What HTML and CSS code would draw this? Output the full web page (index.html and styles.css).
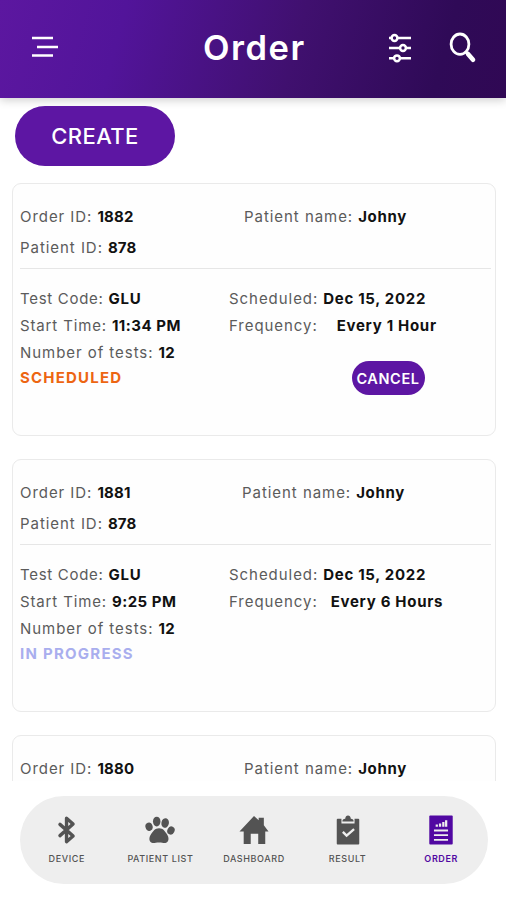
FILE: index.html
```html
<!DOCTYPE html>
<html lang="en">
<head>
<meta charset="utf-8">
<title>Order</title>
<link rel="stylesheet" href="styles.css">
</head>
<body>
<div class="app">
  <header class="topbar">
    <svg class="menu" viewBox="0 0 28 24"><path d="M1 3h21M6 12h21M1 20.500h21" fill="none" stroke="currentColor" stroke-width="2.700"/></svg>
    <h1>Order</h1>
    <svg class="filter" viewBox="0 0 24 32" fill="none" stroke="currentColor"><path d="M1 6h3M9 6h14M1 16h11M18 16h5M1 26.300h5M12 26.300h11" stroke-width="2.600"/><circle cx="6.500" cy="6" r="2.900" stroke-width="2.500"/><circle cx="15" cy="16" r="2.900" stroke-width="2.500"/><circle cx="9" cy="26.300" r="2.900" stroke-width="2.500"/></svg>
    <svg class="search" viewBox="0 0 28 32" fill="none" stroke="currentColor"><ellipse cx="11" cy="12.200" rx="8.900" ry="10.200" stroke-width="2.800"/><path d="M17 20l2 2" stroke-width="2.800"/><path d="M19 22l5 5.700" stroke-width="4.600" stroke-linecap="round"/></svg>
  </header>
  <main class="content">
    <button class="create">CREATE</button>
    <article class="card">
      <section class="summary">
        <p class="order-id"><span class="label">Order ID:</span><b>1882</b></p>
        <p class="patient first"><span class="label">Patient name:</span><b>Johny</b></p>
        <p class="patient-id"><span class="label">Patient ID:</span><b>878</b></p>
      </section>
      <section class="details">
        <p class="code"><span class="label">Test Code:</span><b>GLU</b></p>
        <p class="date"><span class="label">Scheduled:</span><b>Dec 15, 2022</b></p>
        <p class="time"><span class="label">Start Time:</span><b>11:34 PM</b></p>
        <p class="frequency hour"><span class="label">Frequency:</span><b>Every 1 Hour</b></p>
        <p class="tests"><span class="label">Number of tests:</span><b>12</b></p>
      </section>
      <div class="state"><b class="scheduled">SCHEDULED</b><button class="cancel">CANCEL</button></div>
    </article>
    <article class="card">
      <section class="summary">
        <p class="order-id"><span class="label">Order ID:</span><b>1881</b></p>
        <p class="patient second"><span class="label">Patient name:</span><b>Johny</b></p>
        <p class="patient-id"><span class="label">Patient ID:</span><b>878</b></p>
      </section>
      <section class="details">
        <p class="code"><span class="label">Test Code:</span><b>GLU</b></p>
        <p class="date"><span class="label">Scheduled:</span><b>Dec 15, 2022</b></p>
        <p class="time"><span class="label">Start Time:</span><b>9:25 PM</b></p>
        <p class="frequency hours"><span class="label">Frequency:</span><b>Every 6 Hours</b></p>
        <p class="tests"><span class="label">Number of tests:</span><b>12</b></p>
      </section>
      <div class="state"><b class="progress">IN PROGRESS</b></div>
    </article>
    <article class="card">
      <section class="summary">
        <p class="order-id"><span class="label">Order ID:</span><b>1880</b></p>
        <p class="patient third"><span class="label">Patient name:</span><b>Johny</b></p>
      </section>
    </article>
  </main>
  <nav class="tabs">
    <a class="tab"><svg viewBox="0 0 32 32"><path d="M8.500 10l14 12.500-7 6V3.500l7 6-14 12.500" fill="none" stroke="currentColor" stroke-width="3.600" stroke-linejoin="round" stroke-linecap="round"/></svg><span>DEVICE</span></a>
    <a class="tab"><svg viewBox="0 0 32 32" fill="currentColor"><ellipse cx="4.300" cy="12.500" rx="3.800" ry="4.500" transform="rotate(-18 4.300 12.500)"/><ellipse cx="12.500" cy="7" rx="4" ry="5.200"/><ellipse cx="21.500" cy="8.500" rx="4" ry="5.200" transform="rotate(12 21.500 8.500)"/><ellipse cx="27.700" cy="16.500" rx="3.800" ry="4.500" transform="rotate(25 27.700 16.500)"/><path d="M15 14c4.500 0 6 3 8.300 6.300 2.700 3.800 2.400 9-1.500 9.500-2.500.300-3.300-.600-6.800-.600s-4.500.900-7 .600c-4-.500-4.200-5.700-1.500-9.500C8.800 17 10.500 14 15 14z"/></svg><span>PATIENT LIST</span></a>
    <a class="tab"><svg viewBox="0 0 32 32" fill="currentColor"><path d="M16 1l5 4.500V3h5.500v8l5 6.500H28V31h-7.500V20h-8v11H5V17.500H.500z"/></svg><span>DASHBOARD</span></a>
    <a class="tab"><svg viewBox="0 0 32 32"><path d="M5 4h4v5h14V4h4q1 0 1 1v25.500q0 1-1 1H5q-1 0-1-1V5q0-1 1-1z" fill="currentColor"/><path d="M10 7q0-3 3-3 .500-3.500 3-3.500T19 4q3 0 3 3z" fill="currentColor"/><path d="M10.500 18l4 4 8-7" fill="none" stroke="#eee" stroke-width="2.500"/></svg><span>RESULT</span></a>
    <a class="tab active"><svg viewBox="0 0 32 32"><rect x="3.500" y=".500" width="25" height="31" rx="1" fill="currentColor"/><path d="M8.500 16.500h15M8.500 21.500h15M8.500 26.500h15" stroke="#eee" stroke-width="2"/><path d="M11.500 12.500V10M15 12.500V9M18.500 12.500V7.500M21.500 12.500V5.500" stroke="#eee" stroke-width="2.400"/></svg><span>ORDER</span></a>
  </nav>
</div>
</body>
</html>
```

FILE: styles.css
```css
* { box-sizing: border-box; margin: 0; }
body { background: #fff; font-family: Inter, sans-serif; color: #111; }
.app { width: 506px; height: 900px; display: flex; flex-direction: column; overflow: hidden; }
.topbar { height: 98px; flex: none; display: flex; align-items: center; padding: 0 29px 4px 31px; color: #fff; background: linear-gradient(105deg, #5c17a0 0%, #52149a 24%, #40106f 58%, #2f0a57 86%, #300854 100%); box-shadow: 0 2px 9px #0003; }
.menu { width: 28px; height: 24px; }
h1 { font-size: 34.500px; line-height: 44px; font-weight: 600; letter-spacing: 1.500px; margin: 2px 0 0 144px; width: 102px; white-space: nowrap; }
.filter { width: 24px; height: 32px; margin: 1px 0 0 83px; }
.search { width: 28px; height: 32px; margin: 1px 0 0 auto; }
.content { height: 683px; flex: none; padding: 7.500px 10px 0 12px; overflow: hidden; }
button { border: 0; background: #5d16a3; color: #fff; font-family: inherit; }
.create { display: block; width: 160px; height: 60px; margin: 0 0 17.500px 3px; padding: 0; border-radius: 30px; font-size: 22px; font-weight: 500; letter-spacing: .400px; }
.card { height: 253px; margin-bottom: 23px; border: 1.500px solid #eaeaea; border-radius: 9px; padding: 18px 4.500px 0 7px; font-size: 15px; background: #fefefe; }
.summary { display: grid; grid-template-columns: 209px 1fr; grid-auto-rows: 30px; height: 67px; border-bottom: 1px solid #e6e6e6; line-height: 30px; }
.details { display: grid; grid-template-columns: 209px 1fr; grid-auto-rows: 27px; line-height: 27px; padding-top: 16px; }
p { white-space: nowrap; display: flex; gap: 5px; }
.label { color: #5b5b5b; letter-spacing: .950px; }
.code .label { letter-spacing: .700px; }
.time .label { letter-spacing: .850px; }
b { font-weight: 700; letter-spacing: .700px; }
.order-id b, .patient-id b, .tests b { letter-spacing: .200px; }
.time b { letter-spacing: .500px; }
.patient-id { padding-top: .500px; }
.first { padding-left: 15px; }
.second { padding-left: 13px; }
.third { padding-left: 15px; }
.hour { gap: 19px; }
.hours { gap: 13px; }
.state { display: flex; justify-content: space-between; line-height: 24px; padding-right: 66px; }
.scheduled { color: #ed6512; letter-spacing: 1.200px; }
.progress { color: #a9aeee; letter-spacing: 1.250px; }
.cancel { width: 73px; height: 34px; margin-top: -5px; border-radius: 17px; padding: 0; font-size: 14.500px; font-weight: 600; letter-spacing: .600px; }
.tabs { width: 468px; height: 88px; margin: 15px auto 0 20px; flex: none; display: flex; justify-content: space-between; background: #eee; border-radius: 44px; padding: 19px 0 0; color: #535353; }
.tab { width: 94px; display: flex; flex-direction: column; align-items: center; }
.tab svg { width: 30px; height: 30px; }
.tab span { font-size: 9px; line-height: 12px; margin-top: 8px; letter-spacing: .600px; font-weight: 500; white-space: nowrap; }
.tab.active { color: #5108a2; }
.active span { font-weight: 600; }
```
